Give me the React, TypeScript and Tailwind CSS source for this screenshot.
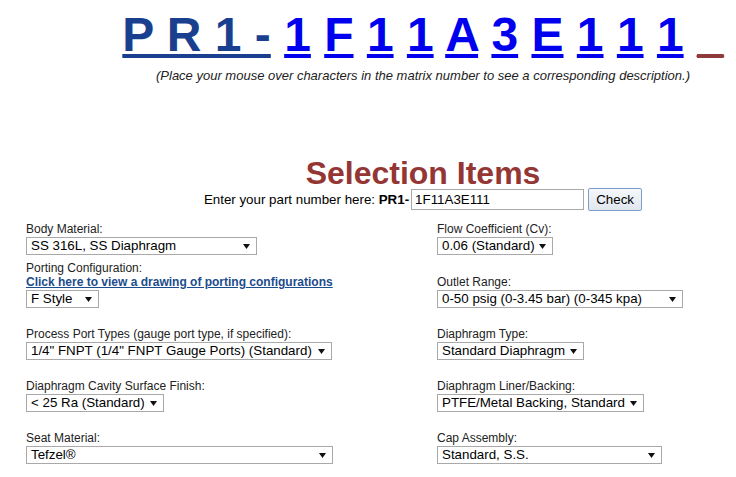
import React from 'react';

const matrix = ['1', 'F', '1', '1', 'A', '3', 'E', '1', '1', '1'];

const Dropdown: React.FC<{ value: string; width: string }> = ({ value, width }) => (
  <div
    className={`mt-px flex h-[18px] items-center justify-between border border-[#a9a9a9] bg-white pl-[4px] pr-[6px] text-[13.333px] leading-none text-black ${width}`}
  >
    <span className="whitespace-nowrap">{value}</span>
    <svg width="7" height="5" viewBox="0 0 7 5" className="shrink-0">
      <path d="M0 0h7L3.5 5z" fill="#111" />
    </svg>
  </div>
);

const Field: React.FC<{ label: string; value: string; width: string }> = ({ label, value, width }) => (
  <div className="flex flex-col items-start">
    <span className="text-[12px] leading-[14px] text-[#222]">{label}</span>
    <Dropdown value={value} width={width} />
  </div>
);

const App: React.FC = () => {
  return (
    <div className="min-h-screen w-full overflow-hidden bg-white font-['Liberation_Sans',Arial,sans-serif]">
      <div className="w-[846px]">
        {/* Matrix number */}
        <div className="pt-[7px] text-center text-[48px] font-bold leading-[55px] whitespace-nowrap">
          <a href="#" className="text-[#1a3f8f] underline">P R 1 -</a>{' '}
          {matrix.map((c, i) => (
            <React.Fragment key={i}>
              <a href="#" className="text-[#0000ee] underline">{c}</a>{' '}
            </React.Fragment>
          ))}
          <span className="text-[#8e3b3b] underline decoration-[#8e3b3b]">_</span>
        </div>
        <p className="mt-[6px] text-center text-[13px] italic leading-[15px] text-[#222]">
          (Place your mouse over characters in the matrix number to see a corresponding description.)
        </p>

        {/* Selection header */}
        <h1 className="mt-[75px] text-center text-[32px] font-bold leading-[30px] text-[#943634]">Selection Items</h1>
        <div className="flex items-center justify-center text-[13.333px] text-black">
          <span className="whitespace-pre">Enter your part number here: </span>
          <b>PR1-</b>
          <input
            defaultValue="1F11A3E111"
            className="ml-[2px] h-[21px] w-[173px] border border-[#a9a9a9] px-[3px] text-[13.333px] outline-none"
          />
          <button className="ml-[4px] h-[23px] w-[54px] rounded-[2px] border border-[#7f9ecb] bg-gradient-to-b from-[#f5f7fa] to-[#e1e6ee] text-[13.333px]">
            Check
          </button>
        </div>

        {/* Option fields */}
        <div className="mt-[11px] pl-[26px]">
          <div className="grid grid-cols-[411px_1fr] items-end">
            <Field label="Body Material:" value="SS 316L, SS Diaphragm" width="w-[231px]" />
            <Field label="Flow Coefficient (Cv):" value="0.06 (Standard)" width="w-[116px]" />
          </div>
          <div className="mt-[6px] grid grid-cols-[411px_1fr] items-end">
            <div className="flex flex-col items-start">
              <span className="text-[12px] leading-[14px] text-[#222]">Porting Configuration:</span>
              <a href="#" className="text-[12px] font-bold leading-[14px] text-[#1c4c8c] underline">
                Click here to view a drawing of porting configurations
              </a>
              <Dropdown value="F Style" width="w-[73px]" />
            </div>
            <Field label="Outlet Range:" value="0-50 psig (0-3.45 bar) (0-345 kpa)" width="w-[246px]" />
          </div>
          <div className="mt-[19px] grid grid-cols-[411px_1fr] items-end">
            <Field
              label="Process Port Types (gauge port type, if specified):"
              value={'1/4" FNPT (1/4" FNPT Gauge Ports) (Standard)'}
              width="w-[306px]"
            />
            <Field label="Diaphragm Type:" value="Standard Diaphragm" width="w-[147px]" />
          </div>
          <div className="mt-[19px] grid grid-cols-[411px_1fr] items-end">
            <Field label="Diaphragm Cavity Surface Finish:" value="< 25 Ra (Standard)" width="w-[138px]" />
            <Field label="Diaphragm Liner/Backing:" value="PTFE/Metal Backing, Standard" width="w-[207px]" />
          </div>
          <div className="mt-[19px] grid grid-cols-[411px_1fr] items-end">
            <Field label="Seat Material:" value="Tefzel®" width="w-[307px]" />
            <Field label="Cap Assembly:" value="Standard, S.S." width="w-[225px]" />
          </div>
        </div>
      </div>
    </div>
  );
};

export default App;
